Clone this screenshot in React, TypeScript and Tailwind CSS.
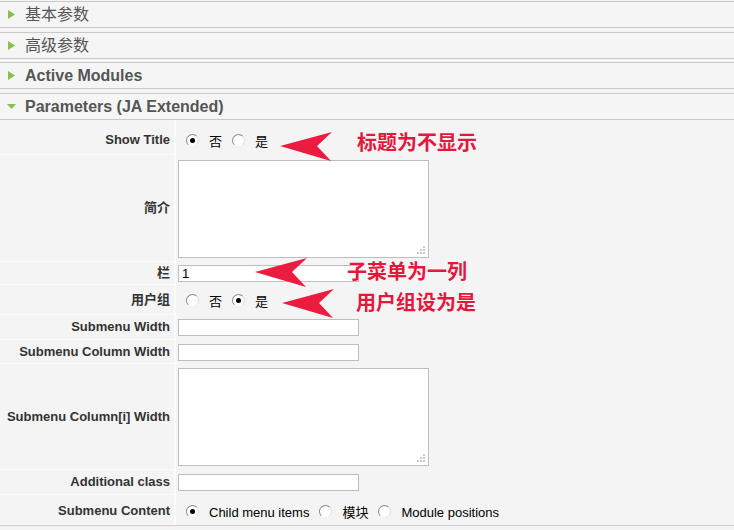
import React from 'react'

const sans = { fontFamily: '"Liberation Sans", Arial, "Noto Sans CJK SC", sans-serif' }

type HeaderProps = { title: string; open?: boolean; cjk?: boolean; className?: string }

const PanelHeader = ({ title, open, cjk, className }: HeaderProps) => (
  <div className={`flex h-[27px] items-center border-y border-[#c9c9c9] bg-[#f5f5f5] pl-[7px] ${className ?? ''}`}>
    <svg width="9" height="11" viewBox="0 0 9 11" className="mr-[9px]">
      {open ? <polygon points="0,3 9,3 4.5,8" fill="#86c04d" /> : <polygon points="1,1 8,5.5 1,10" fill="#86c04d" />}
    </svg>
    <span className={`text-[16px] text-[#555] ${cjk ? 'font-normal' : 'font-bold'}`}>{title}</span>
  </div>
)

const Radio = ({ checked }: { checked?: boolean }) => (
  <span className="relative inline-flex h-[13px] w-[13px] items-center justify-center rounded-full border border-t-[#888] border-l-[#888] border-r-[#ddd] border-b-[#eee] bg-white">
    {checked ? <span className="h-[5px] w-[5px] rounded-full bg-black" /> : null}
  </span>
)

const RadioGroup = ({ options, selected }: { options: string[]; selected: number }) => (
  <div className="flex items-center pl-[10px] text-[13px] text-black">
    {options.map((o, i) => (
      <span key={o} className="mr-[10px] flex items-center">
        <Radio checked={i === selected} />
        <span className="ml-[10px] mt-[3px]">{o}</span>
      </span>
    ))}
  </div>
)

const TextInput = ({ value }: { value?: string }) => (
  <div className="ml-[2px] flex h-[17px] w-[181px] items-center border border-[#bdbdbd] bg-white pl-[3px] text-[13px] text-black">
    {value}
  </div>
)

const TextArea = () => (
  <div className="relative ml-[2px] h-[98px] w-[251px] border border-[#bdbdbd] bg-white">
    <svg width="10" height="10" viewBox="0 0 10 10" className="absolute bottom-[2px] right-[2px]">
      {[[8, 2], [5, 5], [8, 5], [2, 8], [5, 8], [8, 8]].map(([x, y]) => (
        <rect key={`${x}-${y}`} x={x - 1} y={y - 1} width="2" height="2" fill="#c8c8c8" />
      ))}
    </svg>
  </div>
)

type RowProps = { label: string; h: string; pad?: string; children: React.ReactNode }

// label cell is 174px wide plus a 2px light divider, so fields start at x=176
const Row = ({ label, h, pad = '', children }: RowProps) => (
  <div className={`flex ${h}`}>
    <div
      className={`flex w-[176px] shrink-0 items-center justify-end border-b border-r-2 border-[#fbfbfb] pr-[4px] text-[13px] font-bold text-[#333] ${pad}`}
    >
      {label}
    </div>
    <div className={`flex flex-1 items-center ${pad}`}>{children}</div>
  </div>
)

const Arrow = ({ className }: { className: string }) => (
  <svg width="54" height="30" viewBox="0 0 54 30" className={`absolute ${className}`}>
    <polygon points="0,14 52,0 37,14 51,29" fill="#ec1c40" />
  </svg>
)

const Note = ({ text, className }: { text: string; className: string }) => (
  <span
    className={`absolute text-[20px] font-bold leading-none text-[#e4173d] ${className}`}
    style={{ fontFamily: '"Noto Sans CJK SC", sans-serif' }}
  >
    {text}
  </span>
)

export default function App() {
  return (
    <div className="relative h-[530px] w-[734px] overflow-hidden bg-[#f4f4f4] pt-[1px]" style={sans}>
      <PanelHeader title="基本参数" cjk className="h-[26px]" />
      <PanelHeader title="高级参数" cjk className="mt-[4px]" />
      <PanelHeader title="Active Modules" className="mt-[3px]" />
      <PanelHeader title="Parameters (JA Extended)" open className="mt-[4px]" />

      <div className="border-b border-[#cfcfcf]">
        <Row label="Show Title" h="h-[35px]" pad="pt-[6px]">
          <RadioGroup options={['否', '是']} selected={0} />
        </Row>
        <Row label="简介" h="h-[107px]">
          <TextArea />
        </Row>
        <Row label="栏" h="h-[23px]">
          <TextInput value="1" />
        </Row>
        <Row label="用户组" h="h-[30px]">
          <RadioGroup options={['否', '是']} selected={1} />
        </Row>
        <Row label="Submenu Width" h="h-[25px]">
          <TextInput />
        </Row>
        <Row label="Submenu Column Width" h="h-[24px]">
          <TextInput />
        </Row>
        <Row label="Submenu Column[i] Width" h="h-[106px]">
          <TextArea />
        </Row>
        <Row label="Additional class" h="h-[25px]">
          <TextInput />
        </Row>
        <Row label="Submenu Content" h="h-[30px]" pad="pt-[3px]">
          <RadioGroup options={['Child menu items', '模块', 'Module positions']} selected={0} />
        </Row>
      </div>

      <Arrow className="left-[280px] top-[132px]" />
      <Note text="标题为不显示" className="left-[357px] top-[132px]" />
      <Arrow className="left-[255px] top-[258px]" />
      <Note text="子菜单为一列" className="left-[347px] top-[261px]" />
      <Arrow className="left-[282px] top-[289px]" />
      <Note text="用户组设为是" className="left-[356px] top-[292px]" />
    </div>
  )
}
